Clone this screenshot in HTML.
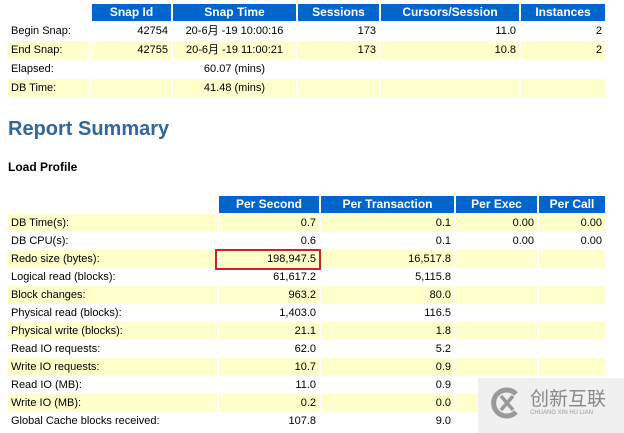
<!DOCTYPE html>
<html><head><meta charset="utf-8"><style>
body{margin:0;background:#fff;font-family:"Liberation Sans","Noto Sans CJK SC",sans-serif;font-size:11px;color:#000;position:relative;width:624px;height:433px;overflow:hidden}
.c{position:absolute;height:18px;line-height:18px;box-sizing:border-box;padding:0 3px;white-space:nowrap}
.h{background:#0066cc;color:#fff;font-weight:bold;text-align:center;font-size:12px;height:17px;line-height:17px}
.y{background:#ffffcc}
.r{text-align:right}
.m{text-align:center}
</style></head><body>
<div id="a"></div>
<div style="position:absolute;left:8px;top:118px;font-size:20px;font-weight:bold;color:#336699">Report Summary</div>
<div style="position:absolute;left:8px;top:160px;font-size:12px;font-weight:bold">Load Profile</div>
<div style="position:absolute;left:478px;top:378px;width:146px;height:55px;background:#f0f0f0"></div>
<svg style="position:absolute;left:488px;top:385px" width="36" height="36" viewBox="0 0 36 36"><path d="M28 9 A13 13 0 1 0 28 27" fill="none" stroke="#999" stroke-width="5"/><path d="M13 11 L25 25 M25 11 L13 25" stroke="#999" stroke-width="3.5"/></svg>
<div style="position:absolute;left:530px;top:387px;font-size:19px;color:#888;font-family:'Noto Sans CJK SC',sans-serif;line-height:22px">创新互联</div>
<div style="position:absolute;left:530px;top:410px;font-size:6px;color:#999">CHUANG XIN HU LIAN</div>
<script>
const a=document.getElementById('a');
function cell(x,y,w,t,cls){const d=document.createElement('div');d.className='c '+cls;d.style.left=x+'px';d.style.top=y+'px';d.style.width=w+'px';d.textContent=t;a.appendChild(d);}
const c1=[[8,82],[92,80],[173,124],[298,82],[381,139],[521,85]];
['','Snap Id','Snap Time','Sessions','Cursors/Session','Instances'].forEach((t,i)=>{if(i)cell(c1[i][0],4,c1[i][1]-1,t,'h')});
const r1=[['Begin Snap:','42754','20-6月 -19 10:00:16','173','11.0','2'],['End Snap:','42755','20-6月 -19 11:00:21','173','10.8','2'],['Elapsed:','','60.07 (mins)','','',''],['DB Time:','','41.48 (mins)','','','']];
r1.forEach((r,j)=>{const y=22+j*19;r.forEach((t,i)=>{cell(c1[i][0],y,c1[i][1]-1,t,(j%2?'y ':'')+(i==0?'':i==2?'m':'r'));});});
const c2=[[8,210],[219,101],[321,134],[456,82],[539,67]];
['','Per Second','Per Transaction','Per Exec','Per Call'].forEach((t,i)=>{if(i)cell(c2[i][0],196,c2[i][1]-1,t,'h')});
const r2=[['DB Time(s):','0.7','0.1','0.00','0.00'],['DB CPU(s):','0.6','0.1','0.00','0.00'],['Redo size (bytes):','198,947.5','16,517.8','',''],['Logical read (blocks):','61,617.2','5,115.8','',''],['Block changes:','963.2','80.0','',''],['Physical read (blocks):','1,403.0','116.5','',''],['Physical write (blocks):','21.1','1.8','',''],['Read IO requests:','62.0','5.2','',''],['Write IO requests:','10.7','0.9','',''],['Read IO (MB):','11.0','0.9','',''],['Write IO (MB):','0.2','0.0','',''],['Global Cache blocks received:','107.8','9.0','','']];
r2.forEach((r,j)=>{const y=214+j*18;r.forEach((t,i)=>{cell(c2[i][0],y,c2[i][1]-1,t,(j%2?'':'y ')+(i?'r':''));});});
const b=document.createElement('div');b.style.cssText='position:absolute;left:215px;top:249px;width:106px;height:21px;border:2px solid #cc2222;box-sizing:border-box';a.appendChild(b);
</script>
</body></html>
